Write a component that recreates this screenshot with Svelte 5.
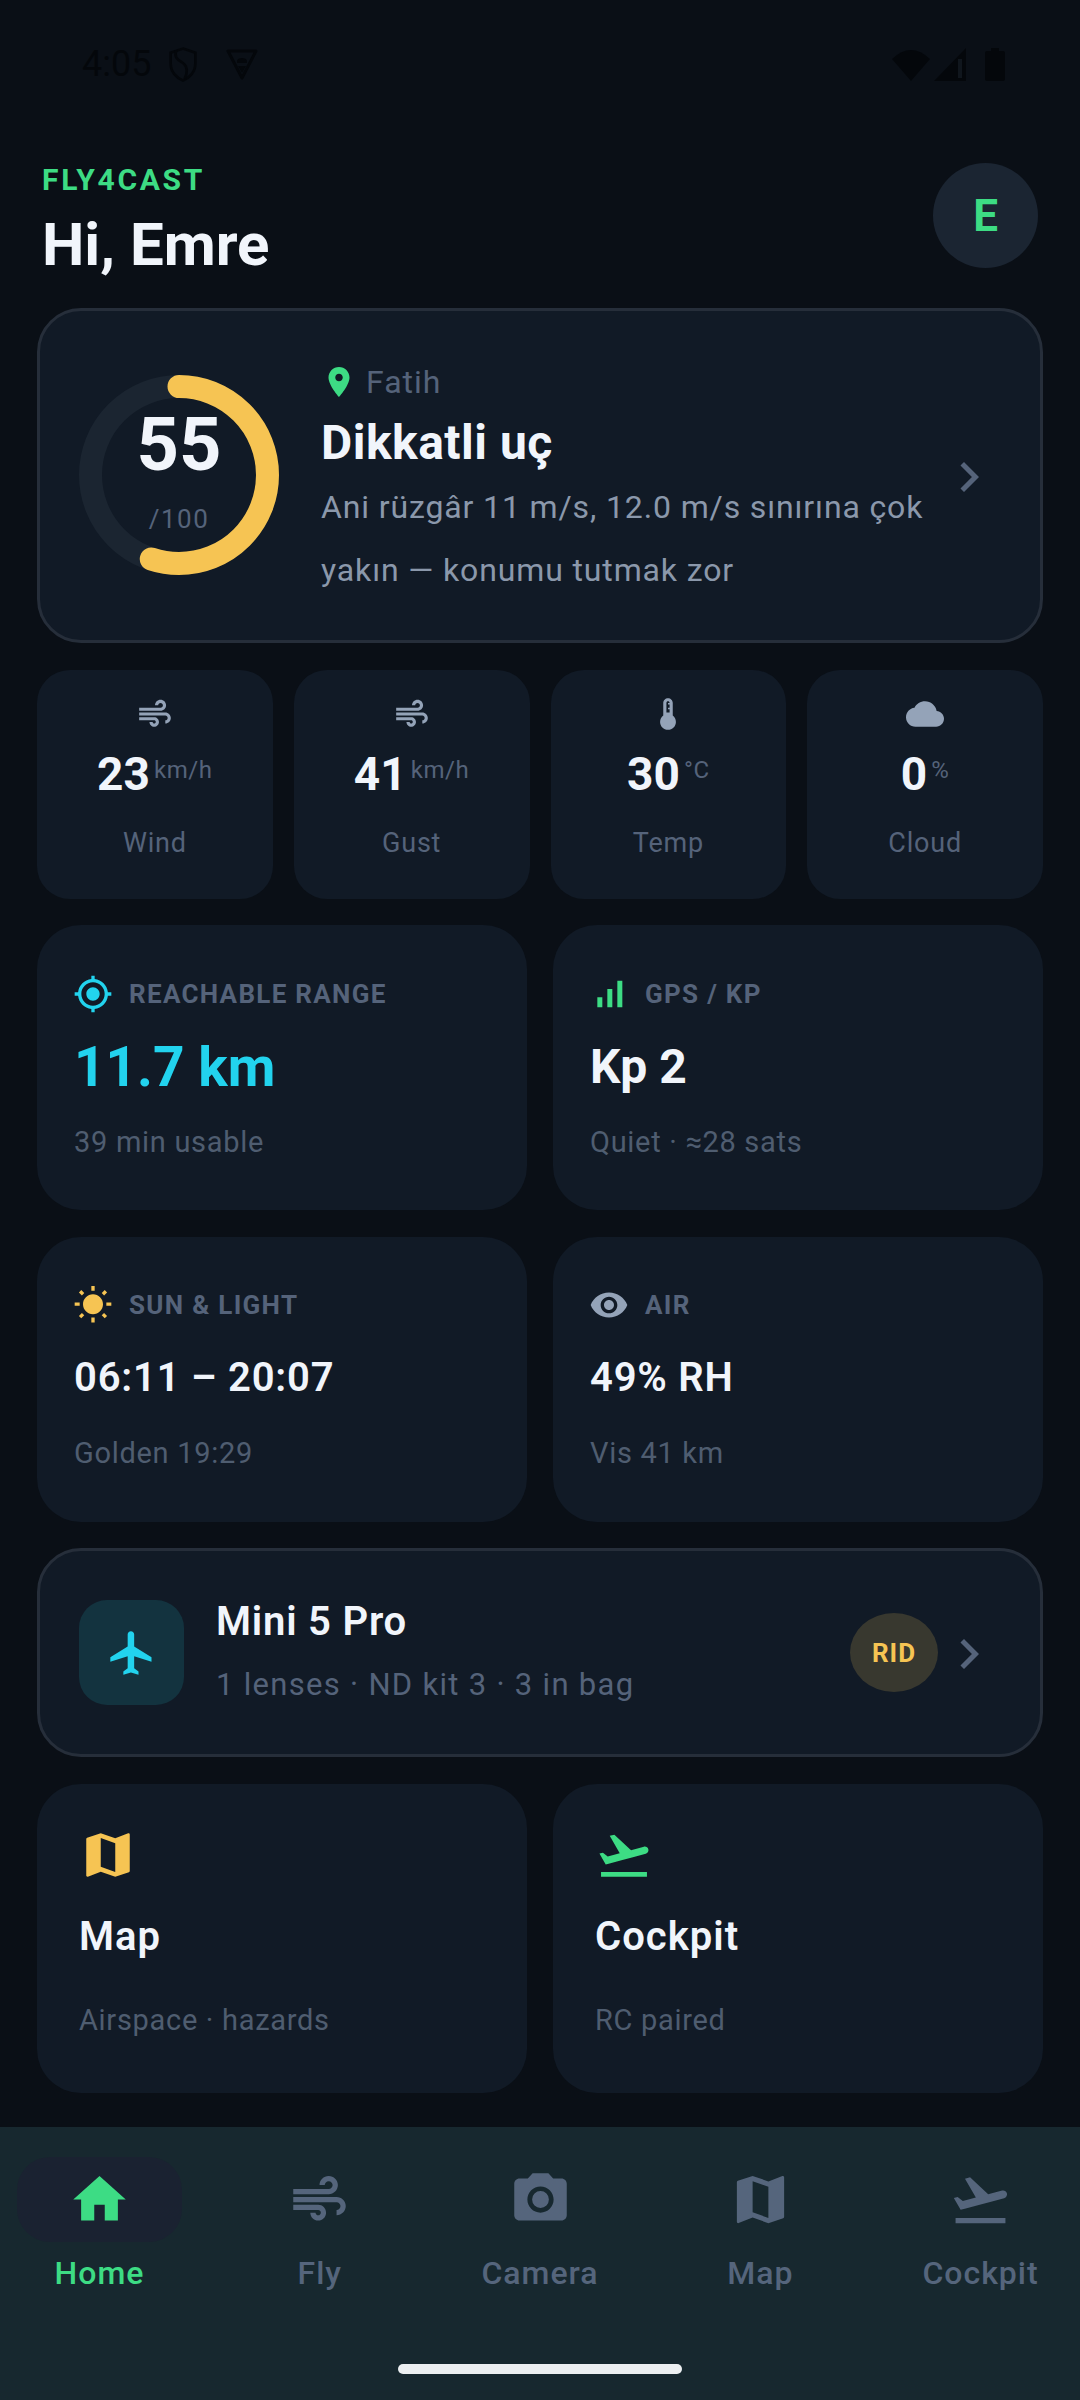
<script>
	const paths = {
		air: 'M14.5 17c0 1.65-1.35 3-3 3s-3-1.35-3-3h2c0 .55.45 1 1 1s1-.45 1-1-.45-1-1-1H2v-2h9.5c1.65 0 3 1.35 3 3zM19 6.5C19 4.57 17.43 3 15.5 3S12 4.57 12 6.5h2c0-.83.67-1.5 1.5-1.5s1.5.67 1.5 1.5S16.33 8 15.5 8H2v2h13.5c1.93 0 3.5-1.57 3.5-3.5zm-.5 4.5H2v2h16.5c.83 0 1.5.67 1.5 1.5s-.67 1.5-1.5 1.5v2c1.93 0 3.5-1.57 3.5-3.5S20.43 11 18.5 11z',
		thermo: 'M15 13V5c0-1.66-1.34-3-3-3S9 3.34 9 5v8c-1.21.91-2 2.37-2 4 0 2.76 2.24 5 5 5s5-2.24 5-5c0-1.63-.79-3.09-2-4zm-4-8c0-.55.45-1 1-1s1 .45 1 1h-1v1h1v2h-1v1h1v2h-2V5z',
		cloud: 'M19.35 10.04C18.67 6.59 15.64 4 12 4 9.11 4 6.6 5.64 5.35 8.04 2.34 8.36 0 10.91 0 14c0 3.31 2.69 6 6 6h13c2.76 0 5-2.24 5-5 0-2.64-2.05-4.78-4.65-4.96z',
		gps: 'M12 8c-2.21 0-4 1.79-4 4s1.79 4 4 4 4-1.79 4-4-1.79-4-4-4zm8.94 3c-.46-4.17-3.77-7.48-7.94-7.94V1h-2v2.06C6.83 3.52 3.52 6.83 3.06 11H1v2h2.06c.46 4.17 3.77 7.48 7.94 7.94V23h2v-2.06c4.17-.46 7.48-3.77 7.94-7.94H23v-2h-2.06zM12 19c-3.87 0-7-3.13-7-7s3.13-7 7-7 7 3.13 7 7-3.13 7-7 7z',
		bars: 'M17 4h3v16h-3V4zM5 14h3v6H5v-6zm6-5h3v11h-3V9z',
		sun: 'M6.76 4.84l-1.8-1.79-1.41 1.41 1.79 1.79 1.42-1.41zM4 10.5H1v2h3v-2zm9-9.95h-2V3.5h2V.55zm7.45 3.91l-1.41-1.41-1.79 1.79 1.41 1.41 1.79-1.79zm-3.21 13.7l1.79 1.8 1.41-1.41-1.8-1.79-1.4 1.4zM20 10.5v2h3v-2h-3zm-8-5c-3.31 0-6 2.69-6 6s2.69 6 6 6 6-2.69 6-6-2.69-6-6-6zm-1 16.95h2V19.5h-2v2.95zm-7.45-3.91l1.41 1.41 1.79-1.8-1.41-1.41-1.79 1.8z',
		eye: 'M12 4.5C7 4.5 2.73 7.61 1 12c1.73 4.39 6 7.5 11 7.5s9.27-3.11 11-7.5c-1.73-4.39-6-7.5-11-7.5zM12 17c-2.76 0-5-2.24-5-5s2.24-5 5-5 5 2.24 5 5-2.24 5-5 5zm0-8c-1.66 0-3 1.34-3 3s1.34 3 3 3 3-1.34 3-3-1.34-3-3-3z',
		pin: 'M12 2C8.13 2 5 5.13 5 9c0 5.25 7 13 7 13s7-7.75 7-13c0-3.87-3.13-7-7-7zm0 9.5c-1.38 0-2.5-1.12-2.5-2.5s1.12-2.5 2.5-2.5 2.5 1.12 2.5 2.5-1.12 2.5-2.5 2.5z',
		chevron: 'M10 6L8.59 7.41 13.17 12l-4.58 4.59L10 18l6-6z',
		plane: 'M21 16v-2l-8-5V3.5c0-.83-.67-1.5-1.5-1.5S10 2.67 10 3.5V9l-8 5v2l8-2.5V19l-2 1.5V22l3.5-1 3.5 1v-1.5L13 19v-5.5l8 2.5z',
		map: 'M20.5 3l-.16.03L15 5.1 9 3 3.36 4.9c-.21.07-.36.25-.36.48V20.5c0 .28.22.5.5.5l.16-.03L9 18.9l6 2.1 5.64-1.9c.21-.07.36-.25.36-.48V3.5c0-.28-.22-.5-.5-.5zM15 19l-6-2.11V5l6 2.11V19z',
		takeoff: 'M2.5 19h19v2h-19v-2zm19.57-9.36c-.21-.8-1.04-1.28-1.84-1.06L14.92 10l-6.9-6.43-1.93.51 4.14 7.17-4.97 1.33-1.97-1.54-1.45.39 1.82 3.16.77 1.33 1.6-.43 5.31-1.42 4.35-1.16L21 11.49c.81-.23 1.28-1.05 1.07-1.85z',
		home: 'M10 20v-6h4v6h5v-8h3L12 3 2 12h3v8z',
		camera: 'M12 15.2a3.2 3.2 0 1 0 0-6.4 3.2 3.2 0 0 0 0 6.4zM9 2L7.17 4H4c-1.1 0-2 .9-2 2v12c0 1.1.9 2 2 2h16c1.1 0 2-.9 2-2V6c0-1.1-.9-2-2-2h-3.17L15 2H9zm3 15c-2.76 0-5-2.24-5-5s2.24-5 5-5 5 2.24 5 5-2.24 5-5 5z'
	};

	const score = 55;
	const radius = 88.5;
	const circumference = 2 * Math.PI * radius;
	const dash = (circumference * score) / 100;

	const tiles = [
		{ icon: 'air', value: '23', unit: 'km/h', label: 'Wind' },
		{ icon: 'air', value: '41', unit: 'km/h', label: 'Gust' },
		{ icon: 'thermo', value: '30', unit: '°C', label: 'Temp' },
		{ icon: 'cloud', value: '0', unit: '%', label: 'Cloud' }
	];

	const stats = [
		{ icon: 'gps', tone: 'cyan', title: 'REACHABLE RANGE', value: '11.7 km', big: true, sub: '39 min usable' },
		{ icon: 'bars', tone: 'green', title: 'GPS / KP', value: 'Kp 2', mid: true, sub: 'Quiet · ≈28 sats' },
		{ icon: 'sun', tone: 'amber', title: 'SUN & LIGHT', value: '06:11 – 20:07', sub: 'Golden 19:29' },
		{ icon: 'eye', tone: 'gray', title: 'AIR', value: '49% RH', sub: 'Vis 41 km' }
	];

	const shortcuts = [
		{ icon: 'map', tone: 'amber', title: 'Map', sub: 'Airspace · hazards' },
		{ icon: 'takeoff', tone: 'green', title: 'Cockpit', sub: 'RC paired' }
	];

	const tabs = [
		{ icon: 'home', label: 'Home', active: true },
		{ icon: 'air', label: 'Fly' },
		{ icon: 'camera', label: 'Camera' },
		{ icon: 'map', label: 'Map' },
		{ icon: 'takeoff', label: 'Cockpit' }
	];
</script>

<div class="screen">
	<div class="statusbar">
		<div class="status-left">
			<span class="clock">4:05</span>
			<svg class="st-shield" viewBox="0 0 27 34" fill="none" stroke="currentColor" stroke-width="2.6">
				<path d="M13.5 1.5L25.5 5.5V16C25.5 24 20 30 13.5 32.5C7 30 1.5 24 1.5 16V5.5Z" />
				<path d="M7 3.5C4 11 10 13 14 16C18 19 18 26 15 31" />
			</svg>
			<svg class="st-tri" viewBox="0 0 32 32" fill="none" stroke="currentColor" stroke-width="3" stroke-linejoin="round">
				<path d="M2 3H30L16 30Z" />
				<path d="M11 13C11 9 21 9 21 13V15H11ZM12 18H20L16 25Z" fill="currentColor" stroke="none" />
			</svg>
		</div>
		<div class="status-right">
			<svg class="st-wifi" viewBox="0 0 38 33" fill="currentColor"><path d="M0 11Q19 -7 38 11L19 33Z" /></svg>
			<svg class="st-cell" viewBox="0 0 32 33" fill="currentColor">
				<path d="M32 0V33H0Z" />
				<rect class="cell-gap" x="24" y="11" width="4" height="19" />
			</svg>
			<svg class="st-batt" viewBox="0 0 20 33" fill="currentColor">
				<path d="M6 0H14V3H18Q20 3 20 5V31Q20 33 18 33H2Q0 33 0 31V5Q0 3 2 3H6Z" />
			</svg>
		</div>
	</div>

	<main class="content">
		<header class="header">
			<div>
				<div class="brand">FLY4CAST</div>
				<h1 class="hello">Hi, Emre</h1>
			</div>
			<div class="avatar">E</div>
		</header>

		<section class="card outlined hero">
			<div class="ring">
				<svg viewBox="0 0 200 200" width="200" height="200">
					<circle class="ring-track" cx="100" cy="100" r={radius} />
					<circle
						class="ring-value"
						cx="100"
						cy="100"
						r={radius}
						stroke-dasharray="{dash} {circumference}"
						transform="rotate(-90 100 100)"
					/>
				</svg>
				<div class="ring-text">
					<span class="score">{score}</span>
					<span class="score-max">/100</span>
				</div>
			</div>
			<div class="hero-text">
				<div class="place">
					<svg class="pin" viewBox="0 0 24 24"><path d={paths.pin} /></svg>
					<span>Fatih</span>
				</div>
				<div class="verdict">Dikkatli uç</div>
				<p class="reason">Ani rüzgâr 11 m/s, 12.0 m/s sınırına çok yakın — konumu tutmak zor</p>
			</div>
			<svg class="chevron" viewBox="0 0 24 24"><path d={paths.chevron} /></svg>
		</section>

		<section class="tiles">
			{#each tiles as t}
				<div class="card tile">
					<svg class="tile-icon" viewBox="0 0 24 24"><path d={paths[t.icon]} /></svg>
					<div class="tile-value">{t.value}<span class="tile-unit">{t.unit}</span></div>
					<div class="tile-label">{t.label}</div>
				</div>
			{/each}
		</section>

		<section class="stats">
			{#each stats as s}
				<div class="card stat">
					<div class="stat-head">
						<svg class="stat-icon {s.tone}" viewBox="0 0 24 24"><path d={paths[s.icon]} /></svg>
						<span>{s.title}</span>
					</div>
					<div class="stat-value" class:big={s.big} class:mid={s.mid}>{s.value}</div>
					<div class="stat-sub">{s.sub}</div>
				</div>
			{/each}
		</section>

		<section class="card outlined drone">
			<div class="drone-icon">
				<svg viewBox="0 0 24 24"><path d={paths.plane} /></svg>
			</div>
			<div class="drone-text">
				<div class="drone-name">Mini 5 Pro</div>
				<div class="drone-sub">1 lenses · ND kit 3 · 3 in bag</div>
			</div>
			<span class="rid">RID</span>
			<svg class="chevron" viewBox="0 0 24 24"><path d={paths.chevron} /></svg>
		</section>

		<section class="shortcuts">
			{#each shortcuts as c}
				<div class="card shortcut">
					<svg class="shortcut-icon {c.tone}" viewBox="0 0 24 24"><path d={paths[c.icon]} /></svg>
					<div class="shortcut-title">{c.title}</div>
					<div class="shortcut-sub">{c.sub}</div>
				</div>
			{/each}
		</section>
	</main>

	<nav class="tabbar">
		<div class="tabs">
			{#each tabs as tab}
				<div class="tab" class:active={tab.active}>
					<div class="tab-pill">
						<svg viewBox="0 0 24 24"><path d={paths[tab.icon]} /></svg>
					</div>
					<span class="tab-label">{tab.label}</span>
				</div>
			{/each}
		</div>
		<div class="home-bar"></div>
	</nav>
</div>

<style>
	:global(body) {
		margin: 0;
		background: #0a0f16;
	}

	.screen {
		width: 1080px;
		height: 2400px;
		display: flex;
		flex-direction: column;
		background: #0a0f16;
		color: #f1f5fb;
		font-family: Roboto, 'Liberation Sans', sans-serif;
		overflow: hidden;
	}

	svg {
		display: block;
		fill: currentColor;
		flex: none;
	}

	.statusbar {
		height: 128px;
		flex: none;
		display: flex;
		justify-content: space-between;
		align-items: center;
		padding: 0 75px 0 82px;
		color: #04070b;
		box-sizing: border-box;
	}

	.status-left,
	.status-right {
		display: flex;
		align-items: center;
	}

	.clock {
		font-size: 36px;
		line-height: 44px;
	}

	.st-shield {
		width: 28px;
		height: 35px;
		margin-left: 18px;
	}

	.st-tri {
		width: 32px;
		height: 32px;
		margin-left: 29px;
	}

	.st-shield,
	.st-tri {
		fill: none;
	}

	.st-wifi {
		width: 38px;
		height: 33px;
	}

	.st-cell {
		width: 32px;
		height: 33px;
		margin-left: 4px;
	}

	.cell-gap {
		fill: #10161d;
	}

	.st-batt {
		width: 20px;
		height: 33px;
		margin-left: 19px;
	}

	.content {
		flex: 1;
		padding: 31px 37px 0;
		display: flex;
		flex-direction: column;
		gap: 26.6px;
	}

	.header {
		display: flex;
		justify-content: space-between;
		align-items: flex-start;
		padding: 0 5px 0 5px;
		margin-bottom: 1.4px;
	}

	.brand {
		padding-top: 1px;
		font-size: 30px;
		line-height: 40px;
		font-weight: 700;
		letter-spacing: 2.7px;
		color: #3ddc84;
	}

	.hello {
		margin: 10px 0 0;
		font-size: 60px;
		line-height: 70px;
		font-weight: 700;
	}

	.avatar {
		width: 105px;
		height: 105px;
		margin-top: 4px;
		border-radius: 50%;
		background: #1b2532;
		color: #3ddc84;
		font-size: 44px;
		font-weight: 700;
		display: flex;
		align-items: center;
		justify-content: center;
	}

	.card {
		background: #111a26;
		border-radius: 44px;
		box-sizing: border-box;
	}

	.outlined {
		border: 3px solid #262e3a;
	}

	.hero {
		height: 335px;
		display: flex;
		align-items: center;
		padding: 0 41px 0 39px;
	}

	.ring {
		position: relative;
		width: 200px;
		height: 200px;
		flex: none;
	}

	.ring-track,
	.ring-value {
		fill: none;
		stroke-width: 23;
	}

	.ring-track {
		stroke: #1b2531;
	}

	.ring-value {
		stroke: #f6c453;
		stroke-linecap: round;
	}

	.ring-text {
		position: absolute;
		inset: 0;
		padding-top: 30px;
		box-sizing: border-box;
		display: flex;
		flex-direction: column;
		align-items: center;
	}

	.score {
		font-size: 74px;
		line-height: 80px;
		font-weight: 700;
	}

	.score-max {
		margin-top: 14px;
		font-size: 26px;
		line-height: 40px;
		letter-spacing: 1.5px;
		color: #55637a;
	}

	.hero-text {
		flex: 1;
		min-width: 0;
		padding: 51px 0 38px 42px;
	}

	.place {
		display: flex;
		align-items: center;
		height: 40px;
		font-size: 32px;
		letter-spacing: 1px;
		color: #55637a;
	}

	.pin {
		width: 36px;
		height: 36px;
		margin-right: 9px;
		color: #3ddc84;
	}

	.verdict {
		margin-top: 11px;
		font-size: 48px;
		line-height: 60px;
		font-weight: 700;
		letter-spacing: 0.5px;
	}

	.reason {
		margin: 3px 0 0;
		font-size: 32px;
		line-height: 63px;
		letter-spacing: 0.87px;
		color: #8b98ab;
	}

	.chevron {
		width: 60px;
		height: 60px;
		margin-top: 3px;
		color: #55637a;
	}

	.tiles {
		display: grid;
		grid-template-columns: repeat(4, 1fr);
		gap: 21px;
	}

	.tile {
		height: 229px;
		border-radius: 33px;
		padding-top: 25px;
		display: flex;
		flex-direction: column;
		align-items: center;
	}

	.tile-icon {
		width: 38px;
		height: 38px;
		color: #94a3b8;
	}

	.tile-value {
		margin-top: 7px;
		font-size: 46px;
		line-height: 60px;
		font-weight: 700;
	}

	.tile-unit {
		margin-left: 4px;
		vertical-align: 12px;
		font-size: 24px;
		font-weight: 400;
		letter-spacing: 0.6px;
		color: #55637a;
	}

	.tile-label {
		margin-top: 21px;
		font-size: 27px;
		line-height: 36px;
		letter-spacing: 0.8px;
		color: #55637a;
	}

	.stats,
	.shortcuts {
		display: grid;
		grid-template-columns: 1fr 1fr;
		gap: 26.6px 26px;
	}

	.stat {
		height: 285px;
		padding: 48.6px 37px 0;
	}

	.stat-head {
		display: flex;
		align-items: center;
		gap: 16px;
		height: 40px;
		font-size: 26px;
		font-weight: 700;
		letter-spacing: 1.3px;
		color: #55637a;
	}

	.stat-icon {
		width: 40px;
		height: 40px;
		margin-left: -1px;
	}

	.stat-value {
		margin-top: 23px;
		font-size: 40px;
		line-height: 60px;
		font-weight: 600;
		letter-spacing: 0.8px;
	}

	.stat-value.mid {
		font-size: 48px;
		font-weight: 700;
		letter-spacing: 0;
	}

	.stat-value.big {
		font-size: 55px;
		font-weight: 700;
		letter-spacing: 0;
		color: #22d3ee;
	}

	.stat-sub {
		margin-top: 25px;
		font-size: 29px;
		line-height: 40px;
		letter-spacing: 0.7px;
		color: #4f5d70;
	}

	.cyan {
		color: #22d3ee;
	}

	.green {
		color: #3ddc84;
	}

	.amber {
		color: #f6c453;
	}

	.gray {
		color: #94a3b8;
	}

	.drone {
		height: 209px;
		display: flex;
		align-items: center;
		padding: 0 41px 0 39px;
	}

	.drone-icon {
		width: 105px;
		height: 105px;
		flex: none;
		border-radius: 28px;
		background: #13333f;
		color: #22d3ee;
		display: flex;
		align-items: center;
		justify-content: center;
	}

	.drone-icon svg {
		width: 52px;
		height: 52px;
	}

	.drone-text {
		flex: 1;
		min-width: 0;
		padding: 0 0 4px 32px;
	}

	.drone-name {
		font-size: 40px;
		line-height: 56px;
		font-weight: 600;
		letter-spacing: 0.8px;
	}

	.drone-sub {
		margin-top: 13px;
		font-size: 31px;
		line-height: 44px;
		letter-spacing: 1.3px;
		color: #55637a;
	}

	.rid {
		width: 88px;
		height: 79px;
		margin-right: 1px;
		flex: none;
		border-radius: 50%;
		background: #38382f;
		color: #f6c453;
		font-size: 26px;
		font-weight: 700;
		letter-spacing: 1px;
		display: flex;
		align-items: center;
		justify-content: center;
	}

	.shortcut {
		height: 309px;
		padding: 42px 42px 0;
	}

	.shortcut-icon {
		width: 58px;
		height: 58px;
	}

	.shortcut-title {
		margin-top: 25px;
		font-size: 40px;
		line-height: 56px;
		font-weight: 600;
		letter-spacing: 1px;
	}

	.shortcut-sub {
		margin-top: 35px;
		font-size: 29px;
		line-height: 40px;
		letter-spacing: 0.7px;
		color: #4f5d70;
	}

	.tabbar {
		height: 273px;
		flex: none;
		background: #17282f;
		position: relative;
	}

	.tabs {
		display: flex;
		justify-content: space-between;
		padding-top: 30px;
	}

	.tab {
		width: 199px;
		display: flex;
		flex-direction: column;
		align-items: center;
		color: #55657c;
	}

	.tab.active {
		color: #3ddc84;
	}

	.tab-pill {
		width: 165px;
		height: 85px;
		border-radius: 33px;
		display: flex;
		align-items: center;
		justify-content: center;
	}

	.tab.active .tab-pill {
		background: #1a2231;
	}

	.tab-pill svg {
		width: 63px;
		height: 63px;
	}

	.tab-label {
		margin-top: 9px;
		font-size: 32px;
		line-height: 44px;
		font-weight: 500;
		letter-spacing: 1px;
	}

	.home-bar {
		position: absolute;
		left: 398px;
		bottom: 26px;
		width: 284px;
		height: 10px;
		border-radius: 5px;
		background: #eceff1;
	}
</style>
